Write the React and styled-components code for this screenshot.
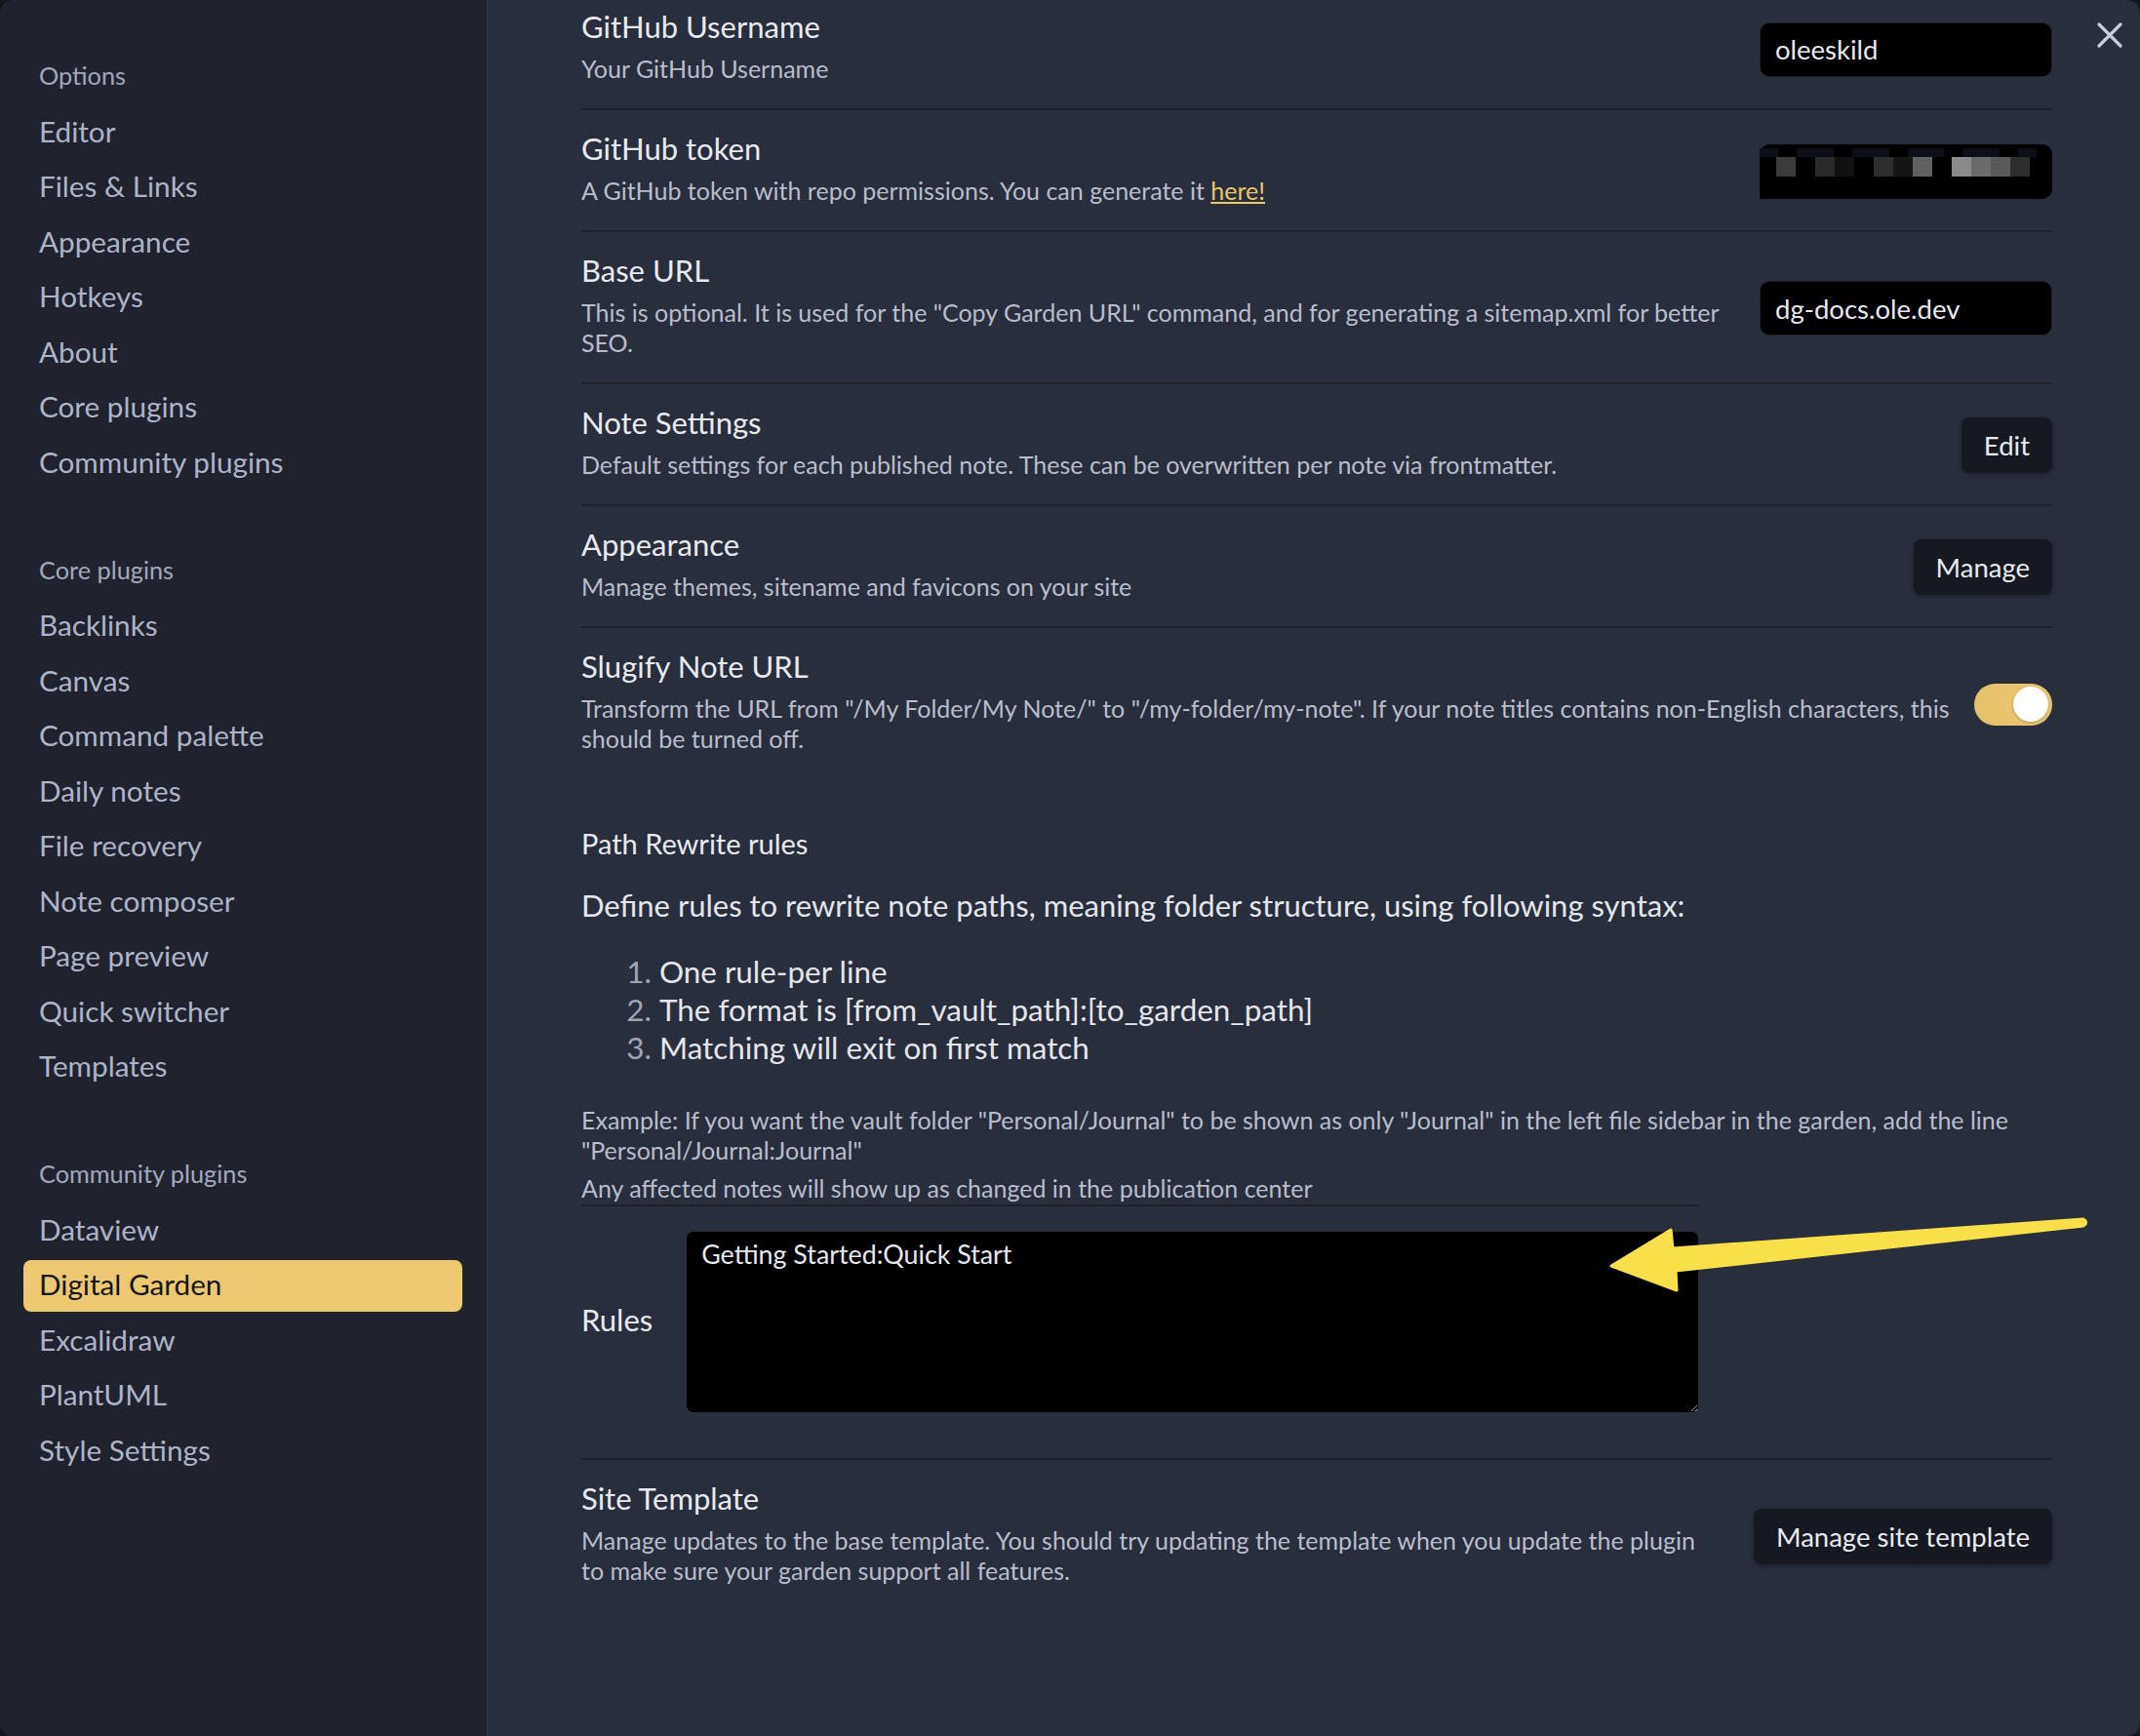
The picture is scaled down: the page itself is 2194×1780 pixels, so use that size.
import styled, { createGlobalStyle } from "styled-components";

const GlobalStyle = createGlobalStyle`
  body {
    margin: 0;
    background: #15171c;
    font-family: Lato, "Liberation Sans", sans-serif;
  }
`;

const Modal = styled.div`
  position: relative;
  display: flex;
  width: 2194px;
  height: 1780px;
  border-radius: 14px;
  overflow: hidden;
  background: #292e3c;
`;

const Sidebar = styled.nav`
  width: 500px;
  flex-shrink: 0;
  box-sizing: border-box;
  background: #20232d;
  border-right: 1px solid #343947;
  padding: 59px 25px 0 24px;
`;

const Group = styled.div`
  margin-bottom: 64px;
`;

const GroupTitle = styled.div`
  height: 36px;
  line-height: 36px;
  padding-left: 16px;
  margin-bottom: 14.5px;
  font-size: 25.3px;
  color: #a2a8bc;
`;

const NavItem = styled.div`
  height: 53px;
  box-sizing: border-box;
  line-height: 50px;
  margin-bottom: 3.5px;
  padding-left: 16px;
  border-radius: 8px;
  font-size: 29.7px;
  color: ${(p) => (p.$active ? "#15161a" : "#aeb4c8")};
  background: ${(p) => (p.$active ? "#edc871" : "transparent")};
`;

const Main = styled.main`
  flex: 1;
  overflow: hidden;
  padding: 0 90px 0 96px;
`;

const Scroll = styled.div`
  margin-top: -12px;
`;

const Row = styled.div`
  display: flex;
  align-items: center;
  gap: 24px;
  padding: 21px 0 25px;
  border-top: 2px solid #1e2129;
  &:first-child {
    border-top: none;
  }
  & > *:not(:first-child) {
    margin-top: 6px;
  }
`;

const Info = styled.div`
  flex: 1;
  min-width: 0;
`;

const Title = styled.div`
  font-size: 31px;
  line-height: 36px;
  color: #e8eaf0;
  margin-bottom: 10px;
`;

const Desc = styled.div`
  font-size: 25px;
  line-height: 31px;
  color: #b9bdcb;
  white-space: nowrap;
`;

const Link = styled.a`
  color: #eac66c;
  text-decoration: underline;
`;

const TextInput = styled.input`
  width: 300px;
  height: 56px;
  box-sizing: border-box;
  background: #000;
  border: 1px solid #1c1f27;
  border-radius: 10px;
  padding: 0 15px;
  font-family: inherit;
  font-size: 27.5px;
  color: #e6e8ee;
  outline: none;
  flex-shrink: 0;
`;

const Blurred = styled.div`
  width: 300px;
  height: 56px;
  box-sizing: border-box;
  background: #000;
  border-radius: 10px 10px 10px 0;
  padding: 4px 16px 0 0;
  flex-shrink: 0;
`;

const PixelRow = styled.div`
  display: flex;
  height: ${(p) => p.$h}px;
  padding-left: ${(p) => p.$pad}px;
`;

const Pixel = styled.div`
  width: 20px;
  height: 100%;
  background: ${(p) => p.$c};
`;

const Button = styled.button`
  height: 57px;
  padding: 0 23px;
  border: none;
  border-radius: 8px;
  background: #161921;
  box-shadow: 0 2px 5px rgba(0, 0, 0, 0.3);
  font-family: inherit;
  font-size: 27.5px;
  color: #e8eaef;
  flex-shrink: 0;
`;

const Toggle = styled.div`
  width: 80px;
  height: 43px;
  box-sizing: border-box;
  border-radius: 22px;
  background: linear-gradient(90deg, #e6c06a, #ecc772);
  display: flex;
  align-items: center;
  justify-content: flex-end;
  padding-right: 4px;
  flex-shrink: 0;
`;

const Knob = styled.div`
  width: 36px;
  height: 36px;
  border-radius: 50%;
  background: #fff;
  box-shadow: 0 1px 3px rgba(0, 0, 0, 0.25);
`;

const SectionHeading = styled.h3`
  margin: 50px 0 0;
  font-size: 29px;
  line-height: 34px;
  font-weight: 400;
  color: #e8eaf0;
`;

const Lead = styled.p`
  margin: 27px 0 0;
  font-size: 31px;
  line-height: 38px;
  color: #e4e6ec;
`;

const Steps = styled.ol`
  margin: 29.5px 0 0;
  padding-left: 80px;
  font-size: 31.4px;
  line-height: 39px;
  color: #e4e6ec;
  li::marker {
    color: #a0a5b6;
  }
`;

const Note = styled.p`
  margin: ${(p) => p.$mt}px 0 0;
  font-size: 25px;
  line-height: 31px;
  color: #b9bdcb;
`;

const RulesRow = styled.div`
  display: flex;
  align-items: center;
  gap: 34px;
  width: 1146px;
  margin-top: 1.5px;
  padding: 25px 0 46px;
  border-top: 2px solid #1e2129;
`;

const RulesLabel = styled.div`
  font-size: 31px;
  color: #e8eaf0;
  padding-bottom: 6px;
`;

const RulesBox = styled.textarea`
  flex: 1;
  height: 187px;
  box-sizing: border-box;
  background: #000;
  border: 1px solid #2a2e38;
  border-radius: 8px;
  padding: 8px 15px;
  font-family: inherit;
  font-size: 26.8px;
  line-height: 30px;
  color: #e6e8ee;
  outline: none;
`;

const CloseButton = styled.div`
  position: absolute;
  top: 22px;
  right: 17px;
  width: 28px;
  height: 28px;
`;

const Arrow = styled.svg`
  position: absolute;
  left: 1640px;
  top: 1240px;
  width: 510px;
  height: 100px;
`;

const groups = [
  {
    title: "Options",
    items: ["Editor", "Files & Links", "Appearance", "Hotkeys", "About", "Core plugins", "Community plugins"],
  },
  {
    title: "Core plugins",
    items: [
      "Backlinks",
      "Canvas",
      "Command palette",
      "Daily notes",
      "File recovery",
      "Note composer",
      "Page preview",
      "Quick switcher",
      "Templates",
    ],
  },
  {
    title: "Community plugins",
    items: ["Dataview", "Digital Garden", "Excalidraw", "PlantUML", "Style Settings"],
  },
];

const topPixels = ["#0d0f18", "#000", "#0d0f18", "#0d0f18", "#000", "#0d0f18", "#0d0f18", "#000", "#0d0f18", "#0d0f18", "#000", "#0d0f18", "#0d0f18", "#000", "#0d0f18"];
const midPixels = ["#3c3c3c", "#000", "#2a2a2a", "#111", "#000", "#2e2e2e", "#161616", "#606060", "#000", "#8a8a8a", "#6b6b6b", "#5a5a5a", "#2d2d2d"];

function TokenField() {
  return (
    <Blurred>
      <PixelRow $h={9} $pad={0}>
        {topPixels.map((c, i) => (
          <Pixel key={i} $c={c} />
        ))}
      </PixelRow>
      <PixelRow $h={20} $pad={17}>
        {midPixels.map((c, i) => (
          <Pixel key={i} $c={c} />
        ))}
      </PixelRow>
    </Blurred>
  );
}

function App() {
  return (
    <Modal>
      <GlobalStyle />
      <Sidebar>
        {groups.map((g) => (
          <Group key={g.title}>
            <GroupTitle>{g.title}</GroupTitle>
            {g.items.map((item) => (
              <NavItem key={item} $active={item === "Digital Garden"}>
                {item}
              </NavItem>
            ))}
          </Group>
        ))}
      </Sidebar>

      <Main>
        <Scroll>
          <Row>
            <Info>
              <Title>GitHub Username</Title>
              <Desc>Your GitHub Username</Desc>
            </Info>
            <TextInput readOnly value="oleeskild" />
          </Row>
          <Row>
            <Info>
              <Title>GitHub token</Title>
              <Desc>
                A GitHub token with repo permissions. You can generate it <Link>here!</Link>
              </Desc>
            </Info>
            <TokenField />
          </Row>
          <Row>
            <Info>
              <Title>Base URL</Title>
              <Desc>
                This is optional. It is used for the "Copy Garden URL" command, and for generating a sitemap.xml for
                better
                <br />
                SEO.
              </Desc>
            </Info>
            <TextInput readOnly value="dg-docs.ole.dev" />
          </Row>
          <Row>
            <Info>
              <Title>Note Settings</Title>
              <Desc>Default settings for each published note. These can be overwritten per note via frontmatter.</Desc>
            </Info>
            <Button>Edit</Button>
          </Row>
          <Row>
            <Info>
              <Title>Appearance</Title>
              <Desc>Manage themes, sitename and favicons on your site</Desc>
            </Info>
            <Button>Manage</Button>
          </Row>
          <Row>
            <Info>
              <Title>Slugify Note URL</Title>
              <Desc>
                Transform the URL from "/My Folder/My Note/" to "/my-folder/my-note". If your note titles contains
                non-English characters, this
                <br />
                should be turned off.
              </Desc>
            </Info>
            <Toggle>
              <Knob />
            </Toggle>
          </Row>

          <SectionHeading>Path Rewrite rules</SectionHeading>
          <Lead>Define rules to rewrite note paths, meaning folder structure, using following syntax:</Lead>
          <Steps>
            <li>One rule-per line</li>
            <li>The format is [from_vault_path]:[to_garden_path]</li>
            <li>Matching will exit on first match</li>
          </Steps>
          <Note $mt={39}>
            Example: If you want the vault folder "Personal/Journal" to be shown as only "Journal" in the left file
            sidebar in the garden, add the line
            <br />
            "Personal/Journal:Journal"
          </Note>
          <Note $mt={8}>Any affected notes will show up as changed in the publication center</Note>

          <RulesRow>
            <RulesLabel>Rules</RulesLabel>
            <RulesBox readOnly value="Getting Started:Quick Start" />
          </RulesRow>

          <Row>
            <Info>
              <Title>Site Template</Title>
              <Desc>
                Manage updates to the base template. You should try updating the template when you update the plugin
                <br />
                to make sure your garden support all features.
              </Desc>
            </Info>
            <Button>Manage site template</Button>
          </Row>
        </Scroll>
      </Main>

      <CloseButton>
        <svg width="28" height="28" viewBox="0 0 28 28">
          <path d="M3 3 L25 25 M25 3 L3 25" stroke="#c9cdd8" strokeWidth="3.2" strokeLinecap="round" />
        </svg>
      </CloseButton>

      <Arrow viewBox="0 0 510 100">
        <path
          d="M12 58 L73 21 L75 40 L496 10 L496 17 L78 63 L79 83 Z"
          fill="#f9e04b"
          stroke="#f9e04b"
          strokeWidth="3"
          strokeLinejoin="round"
        />
        <circle cx="496" cy="13.5" r="4" fill="#f9e04b" />
      </Arrow>
    </Modal>
  );
}

export default App;
